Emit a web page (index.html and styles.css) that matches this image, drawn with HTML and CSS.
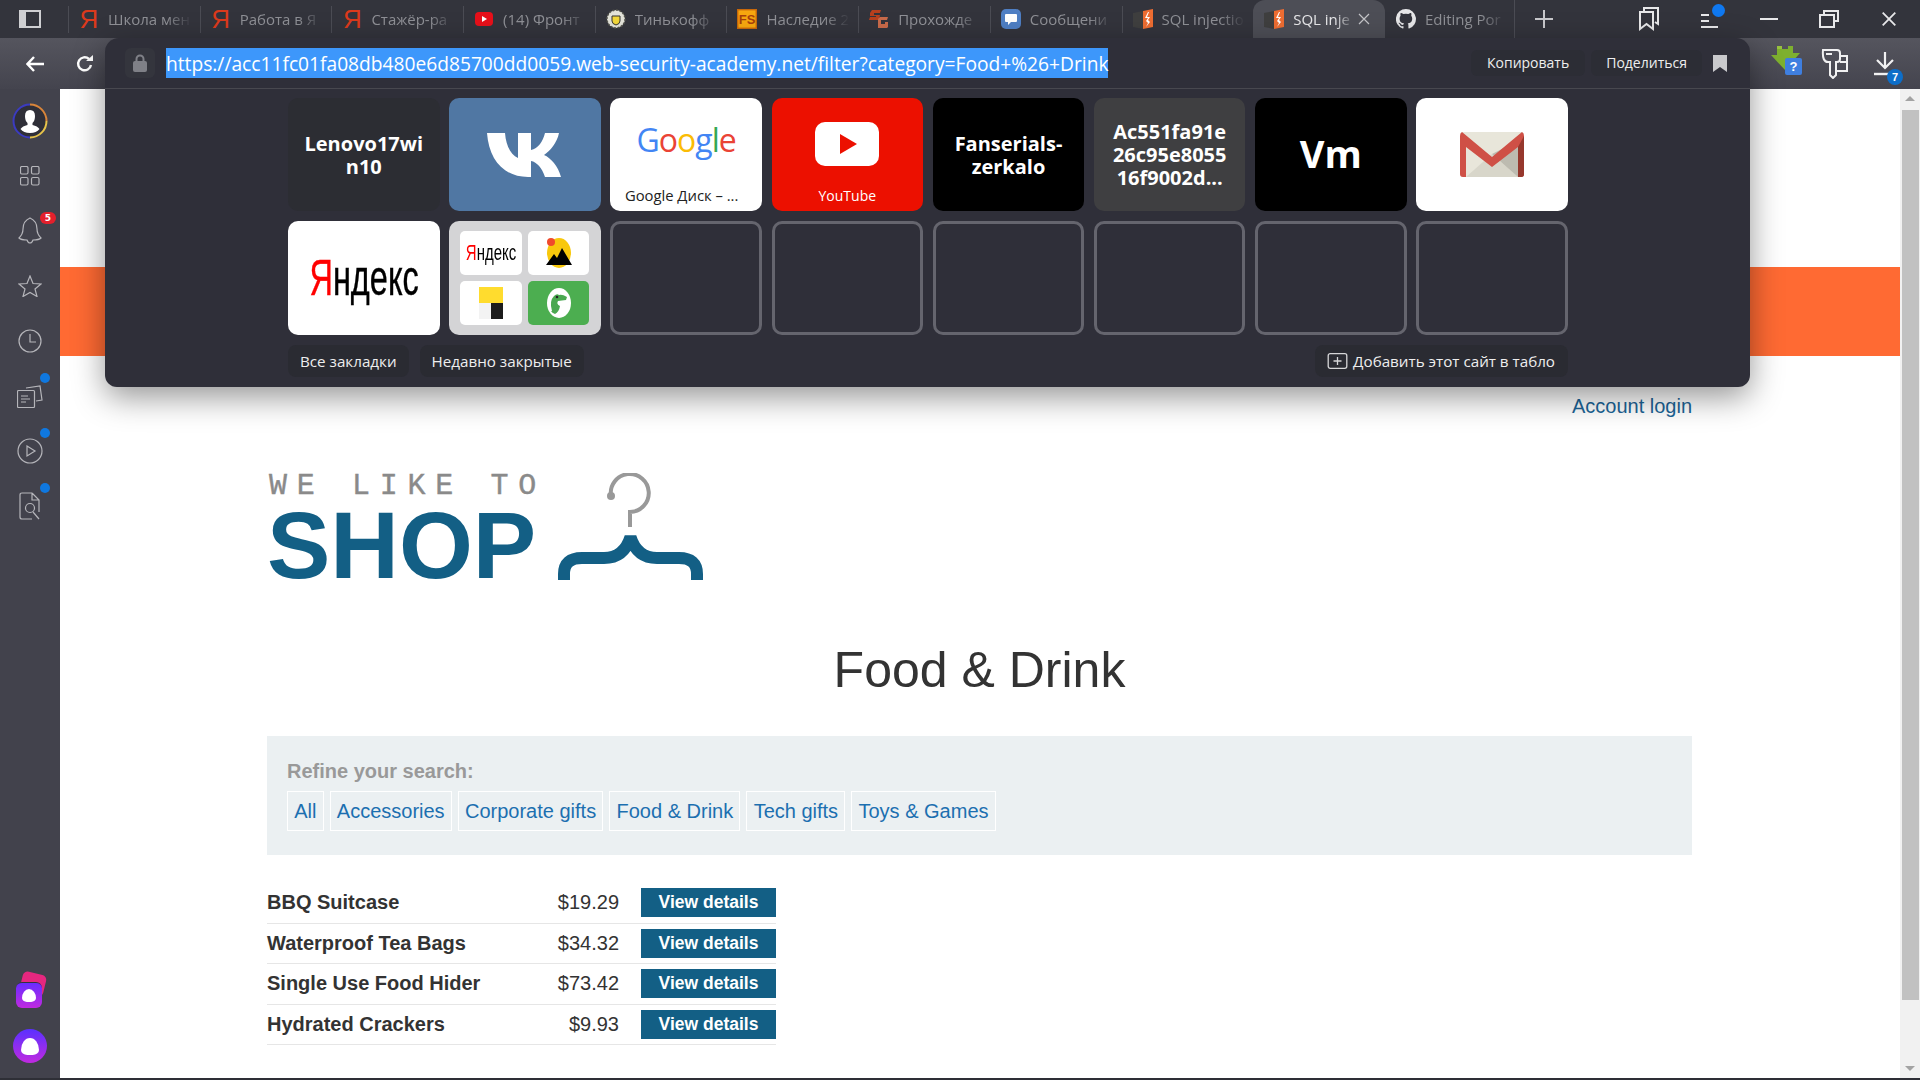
FILE: index.html
```html
<!DOCTYPE html>
<html lang="en">
<head>
    <meta charset="UTF-8">
    <title>SQL injection</title>
    <link rel="stylesheet" href="styles.css">
</head>
<body>

    <!-- Tabs row -->
    <div class="titlebar">
        <div class="sys-btn">
            <svg width="22" height="18" viewBox="0 0 22 18"><rect x="1" y="1" width="20" height="16" fill="none" stroke="#cfcfd2" stroke-width="2"/><rect x="1" y="1" width="6" height="16" fill="#cfcfd2"/></svg>
        </div>
        <div class="tabs">
            <div class="tab"><span class="ya">Я</span><span class="tab-title">Школа мен</span></div>
            <div class="tab"><span class="ya">Я</span><span class="tab-title">Работа в Я</span></div>
            <div class="tab"><span class="ya">Я</span><span class="tab-title">Стажёр-ра</span></div>
            <div class="tab">
                <svg class="tab-icon" viewBox="0 0 20 20"><rect x="1" y="3" width="18" height="14" rx="4" fill="#e8101a"/><path d="M8 7l5 3-5 3z" fill="#fff"/></svg>
                <span class="tab-title">(14) Фронт</span>
            </div>
            <div class="tab">
                <svg class="tab-icon" viewBox="0 0 20 20"><circle cx="10" cy="10" r="9" fill="#e4e4da"/><circle cx="10" cy="10" r="9" fill="none" stroke="#55554e" stroke-width="1.5" stroke-dasharray="2 1.5"/><path d="M6 7h8v5q0 3-4 4-4-1-4-4z" fill="#f4d93a" stroke="#333" stroke-width="1"/></svg>
                <span class="tab-title">Тинькофф</span>
            </div>
            <div class="tab">
                <svg class="tab-icon" viewBox="0 0 20 20"><rect width="20" height="20" fill="#f7a80f"/><rect x=".7" y=".7" width="18.600" height="18.600" fill="none" stroke="#c9680a" stroke-width="1.400"/><text x="10" y="15" class="fs-mark">FS</text></svg>
                <span class="tab-title">Наследие 2</span>
            </div>
            <div class="tab">
                <svg class="tab-icon" viewBox="0 0 20 20"><path d="M1 4l2-3h9l-1 3H5v2h6l-1 5H0l1-3h6V7H1z" fill="#b8401e"/><path d="M9 10l2-2h8l-1 3h-6v4h4v-2h3v5l-1 1H9z" fill="#c96a4a"/></svg>
                <span class="tab-title">Прохожде</span>
            </div>
            <div class="tab">
                <svg class="tab-icon" viewBox="0 0 20 20"><rect width="20" height="20" rx="5" fill="#4f7fc4"/><path d="M5 5h10q1 0 1 1v6q0 1-1 1h-5l-3 3v-3H5q-1 0-1-1V6q0-1 1-1z" fill="#fff"/></svg>
                <span class="tab-title">Сообщени</span>
            </div>
            <div class="tab">
                <svg class="tab-icon" viewBox="0 0 20 20"><use href="#academy"/></svg>
                <span class="tab-title">SQL injectio</span>
            </div>
            <div class="tab active">
                <svg class="tab-icon" viewBox="0 0 20 20"><use href="#academy"/></svg>
                <span class="tab-title short">SQL inje</span>
                <svg class="tab-close" width="12" height="12" viewBox="0 0 12 12"><path d="M1 1l10 10M11 1L1 11" stroke="#c4c4c8" stroke-width="1.200"/></svg>
            </div>
            <div class="tab">
                <svg class="tab-icon" viewBox="0 0 20 20"><path d="M10 0a10 10 0 0 0-3.200 19.500c.5.100.7-.2.7-.5v-1.800c-2.800.6-3.400-1.300-3.400-1.300-.4-1.200-1.100-1.500-1.100-1.500-.9-.6.100-.6.100-.6 1 .1 1.500 1 1.500 1 .9 1.500 2.300 1.100 2.900.8.100-.6.300-1.100.6-1.300-2.200-.3-4.500-1.100-4.500-4.900 0-1.100.4-2 1-2.700-.1-.3-.4-1.300.1-2.600 0 0 .8-.3 2.700 1a9.400 9.400 0 0 1 5 0c1.900-1.300 2.700-1 2.700-1 .5 1.300.2 2.300.1 2.600.6.700 1 1.600 1 2.700 0 3.800-2.300 4.700-4.500 4.900.4.300.7.900.7 1.900V19c0 .3.200.6.700.5A10 10 0 0 0 10 0z" fill="#e6e6e8"/></svg>
                <span class="tab-title">Editing Por</span>
            </div>
        </div>
        <div class="new-tab">
            <svg width="20" height="20" viewBox="0 0 20 20"><path d="M10 1v18M1 10h18" stroke="#c8c8cc" stroke-width="2"/></svg>
        </div>
        <div class="win-controls">
            <div class="win-btn">
                <svg width="22" height="24" viewBox="0 0 22 24"><path d="M6 4V1h14v16l-3-2" fill="none" stroke="#e8e8ea" stroke-width="2"/><path d="M2 5h13v17l-6.500-5L2 22z" fill="none" stroke="#e8e8ea" stroke-width="2"/></svg>
            </div>
            <div class="win-btn">
                <span class="list-icon"><i></i><i></i><i></i><b class="blue-dot"></b></span>
            </div>
            <div class="win-btn"><svg width="18" height="2" viewBox="0 0 18 2"><rect width="18" height="2" fill="#e8e8ea"/></svg></div>
            <div class="win-btn">
                <svg width="20" height="18" viewBox="0 0 20 18"><path d="M5 4V1h14v10h-4" fill="none" stroke="#e8e8ea" stroke-width="2"/><rect x="1" y="5" width="14" height="12" fill="none" stroke="#e8e8ea" stroke-width="2"/></svg>
            </div>
            <div class="win-btn"><svg width="14" height="14" viewBox="0 0 14 14"><path d="M.7.700l12.600 12.600M13.300.700L.7 13.300" stroke="#e8e8ea" stroke-width="1.800"/></svg></div>
        </div>
    </div>

    <!-- Toolbar under the tabs -->
    <div class="toolbar">
        <div class="nav-btns">
            <svg width="18" height="16" viewBox="0 0 18 16"><path d="M8 1L1.500 8 8 15M2 8h16" fill="none" stroke="#fff" stroke-width="2.400"/></svg>
            <svg width="18" height="18" viewBox="0 0 18 18"><path d="M15 10a6.500 6.500 0 1 1-2-6" fill="none" stroke="#fff" stroke-width="2.400"/><path d="M10 6h7V0z" fill="#fff"/></svg>
        </div>
        <div class="tool-icons">
            <span class="tool-icon">
                <svg width="34" height="36" viewBox="0 0 34 36"><path d="M7 0h5v3h6V0h5v7h7L15 24 1 9h6z" fill="#7eb02f"/><path d="M7 0h5v3H7z" fill="#98c23f"/><rect x="15" y="12" width="17" height="17" rx="2" fill="#3f7fe0"/><text x="23.500" y="25" class="help-mark">?</text></svg>
            </span>
            <span class="tool-icon">
                <svg width="28" height="30" viewBox="0 0 28 30"><path d="M2 1h14q3 0 3 3v6q0 3-3 3h-1v13l-3 3-3-3V13H7q-6 0-5-12z" fill="none" stroke="#f1f1f2" stroke-width="2"/><path d="M5 5h6" stroke="#f1f1f2" stroke-width="2"/><path d="M19 7h7v15H15" fill="none" stroke="#f1f1f2" stroke-width="2"/><path d="M19 13h7" stroke="#f1f1f2" stroke-width="2"/></svg>
            </span>
            <span class="tool-icon dl">
                <svg width="22" height="24" viewBox="0 0 22 24"><path d="M11 0v15M3 8l8 8 8-8" fill="none" stroke="#f1f1f2" stroke-width="2.200"/><path d="M0 22h22" stroke="#f1f1f2" stroke-width="2.400"/></svg>
                <span class="count">7</span>
            </span>
        </div>
    </div>

    <div class="main">
        <!-- Left side panel -->
        <aside class="sidebar">
            <div class="side-item">
                <svg width="36" height="36" viewBox="0 0 36 36"><circle cx="18" cy="18" r="16.500" fill="#2f2f38"/><path d="M18 1.500a16.500 16.500 0 0 1 16.500 16.500" fill="none" stroke="#d9853a" stroke-width="2"/><path d="M34.500 18A16.500 16.500 0 0 1 18 34.500" fill="none" stroke="#e6c34a" stroke-width="2"/><path d="M18 34.500A16.500 16.500 0 0 1 18 1.500" fill="none" stroke="#3b3bc0" stroke-width="2"/><path d="M18 7q5 0 5 6 0 5-2.500 7v2q5 1 7 4-3 4-9.500 4t-9.500-4q2-3 7-4v-2Q13 18 13 13q0-6 5-6z" fill="#fff"/></svg>
            </div>
            <div class="side-item">
                <svg class="side-icon" width="20" height="20" viewBox="0 0 20 20"><rect x=".5" y=".5" width="7.500" height="7.500" rx="1.500"/><rect x="11.500" y=".5" width="7.500" height="7.500" rx="1.500"/><rect x=".5" y="11.500" width="7.500" height="7.500" rx="1.500"/><rect x="11.500" y="11.500" width="7.500" height="7.500" rx="1.500"/></svg>
            </div>
            <div class="side-item">
                <svg class="side-icon" width="24" height="28" viewBox="0 0 24 28"><path d="M12 1q7 3 7 11 0 5 4 9-2 2-8 2-1 3-3 3t-3-3q-6 0-8-2 4-4 4-9 0-8 7-11z"/></svg>
                <span class="red-badge">5</span>
            </div>
            <div class="side-item">
                <svg class="side-icon" width="24" height="22" viewBox="0 0 24 22"><path d="M12 1l3 7.500 8 .5-6 5 2 7.500-7-4-7 4 2-7.500-6-5 8-.5z"/></svg>
            </div>
            <div class="side-item">
                <svg class="side-icon" width="24" height="24" viewBox="0 0 24 24"><circle cx="12" cy="12" r="11"/><path d="M12 5v8h6"/></svg>
            </div>
            <div class="side-item">
                <svg class="side-icon" width="26" height="24" viewBox="0 0 26 24"><path d="M9 4l14-2 2 14-6 1"/><rect x=".5" y="6.500" width="17" height="17" rx="1"/><path d="M4 12h7M4 15h9M4 18h5"/></svg>
                <span class="blue-badge"></span>
            </div>
            <div class="side-item">
                <svg class="side-icon" width="26" height="26" viewBox="0 0 26 26"><circle cx="13" cy="13" r="12"/><path d="M10 8l8 5-8 5z"/></svg>
                <span class="blue-badge"></span>
            </div>
            <div class="side-item">
                <svg class="side-icon" width="22" height="28" viewBox="0 0 22 28"><path d="M13 1H3Q1 1 1 3v22q0 2 2 2h10M13 1l7 7v12M13 1v7h7"/><circle cx="11" cy="16" r="4.500"/><path d="M14 20l6 7"/></svg>
                <span class="blue-badge"></span>
            </div>
            <div class="side-bottom">
                <div class="alice-stack"><span class="alice-back"></span><span class="alice-square"><i class="alice-mark"></i></span></div>
                <div class="alice-round"><i class="alice-mark"></i></div>
            </div>
        </aside>

        <!-- The shop page -->
        <div class="page">
            <div class="page-scroll">
                <div class="academy-bar"></div>
                <div class="container">
                    <div class="account"><a href="#">Account login</a></div>
                    <div class="logo">
                        <div class="logo-text">
                            <div class="logo-top">WE LIKE TO</div>
                            <div class="logo-shop">SHOP</div>
                        </div>
                        <svg class="hanger" width="146" height="108" viewBox="0 0 146 108">
                            <circle cx="53" cy="23" r="4" fill="#999"/>
                            <path d="M53 23A19 19 0 1 1 72 39V54" fill="none" stroke="#999" stroke-width="4"/>
                            <path d="M6 107V101Q6 85 24 85H46Q66 85 72.500 64Q79 85 99 85H121Q139 85 139 101V107" fill="none" stroke="#135f85" stroke-width="12" stroke-linejoin="bevel"/>
                        </svg>
                    </div>
                    <h1>Food &amp; Drink</h1>
                    <section class="filters">
                        <div class="filters-label">Refine your search:</div>
                        <div class="filters-links">
                            <a href="#">All</a>
                            <a href="#">Accessories</a>
                            <a href="#">Corporate gifts</a>
                            <a href="#">Food &amp; Drink</a>
                            <a href="#">Tech gifts</a>
                            <a href="#">Toys &amp; Games</a>
                        </div>
                    </section>
                    <div class="products">
                        <div class="product"><span class="product-name">BBQ Suitcase</span><span class="product-price">$19.29</span><a class="btn" href="#">View details</a></div>
                        <div class="product"><span class="product-name">Waterproof Tea Bags</span><span class="product-price">$34.32</span><a class="btn" href="#">View details</a></div>
                        <div class="product"><span class="product-name">Single Use Food Hider</span><span class="product-price">$73.42</span><a class="btn" href="#">View details</a></div>
                        <div class="product"><span class="product-name">Hydrated Crackers</span><span class="product-price">$9.93</span><a class="btn" href="#">View details</a></div>
                    </div>
                </div>
            </div>
            <div class="scrollbar">
                <span class="arrow-up"></span>
                <span class="thumb"></span>
                <span class="arrow-down"></span>
            </div>
        </div>
    </div>
    <div class="bottom-line"></div>

    <!-- Address bar dropdown with the tablo -->
    <div class="tablo">
        <div class="address">
            <span class="lock">
                <svg width="14" height="18" viewBox="0 0 14 18"><path d="M3.500 8V5a3.500 3.500 0 0 1 7 0v3" fill="none" stroke="#7f8087" stroke-width="2"/><rect y="7" width="14" height="11" rx="2" fill="#7f8087"/></svg>
            </span>
            <span class="url">https://acc11fc01fa08db480e6d85700dd0059.web-security-academy.net/filter?category=Food+%26+Drink</span>
            <span class="addr-btn">Копировать</span>
            <span class="addr-btn">Поделиться</span>
            <svg class="addr-mark" width="14" height="17" viewBox="0 0 14 17"><path d="M0 0h14v17l-7-5-7 5z" fill="#c9c9cc"/></svg>
        </div>

        <div class="tiles">
            <div class="tile tile-dark name">Lenovo17wi<br>n10</div>
            <div class="tile tile-vk">
                <svg width="76" height="46" viewBox="0 0 76 46"><path d="M0 1h18c1 13 6 22 13 25V1h13v17c7-1 12-9 14-17h14c-2 10-9 18-15 22 7 3 14 11 17 22H58c-3-9-8-15-14-16v16h-3C17 45 2 28 0 1z" fill="#fff"/></svg>
            </div>
            <div class="tile tile-white with-caption">
                <div class="google"><span class="g-b">G</span><span class="g-r">o</span><span class="g-y">o</span><span class="g-b">g</span><span class="g-g">l</span><span class="g-r">e</span></div>
                <div class="caption">Google Диск – ...</div>
            </div>
            <div class="tile tile-red with-caption">
                <svg class="yt" width="64" height="44" viewBox="0 0 64 44"><rect width="64" height="44" rx="10" fill="#fff"/><path d="M25 12l17 10-17 10z" fill="#ec1000"/></svg>
                <div class="caption">YouTube</div>
            </div>
            <div class="tile tile-black name">Fanserials-<br>zerkalo</div>
            <div class="tile tile-gray name">Ac551fa91e<br>26c95e8055<br>16f9002d...</div>
            <div class="tile tile-black name big">Vm</div>
            <div class="tile tile-white">
                <svg width="64" height="46" viewBox="0 0 64 46"><rect width="64" height="45" rx="3" fill="#e8e6da"/><path d="M6 45L32 22l26 23z" fill="#d8d6ca"/><path d="M64 6v36q0 3-3 3h-3L32 22z" fill="#bdbbb0"/><path d="M2 0l30 25L62 0q2 1 2 4v38q0 3-3 3h-3V15L32 35 6 15v30H3q-3 0-3-3V4q0-3 2-4z" fill="#cf5046"/><path d="M58 15v30h3q3 0 3-3V4z" fill="#96382d"/></svg>
            </div>

            <div class="tile tile-white"><div class="yandex big-ya"><span>Я</span>ндекс</div></div>
            <div class="tile tile-folder">
                <div class="mini"><div class="yandex small-ya"><span>Я</span>ндекс</div></div>
                <div class="mini">
                    <svg width="26" height="32" viewBox="0 0 26 32"><ellipse cx="13" cy="16" rx="12" ry="15" fill="#f8c80c"/><circle cx="5" cy="5" r="4" fill="#f04a2c"/><path d="M0 28l8-11 3 4 5-10 10 17z" fill="#000"/></svg>
                </div>
                <div class="mini">
                    <svg width="24" height="32" viewBox="0 0 24 32"><rect width="24" height="16" fill="#ffdc2e"/><rect y="16" width="12" height="16" fill="#f3f3f3"/><rect x="12" y="16" width="12" height="16" fill="#1c1c1c"/></svg>
                </div>
                <div class="mini mini-green">
                    <svg width="26" height="32" viewBox="0 0 26 32"><ellipse cx="13" cy="16" rx="12" ry="15" fill="#fff"/><path d="M6 24Q3 14 8 9q3-3 5-1 3-1 8 2l-1 3-8 1q-2 3 2 5-1 6-5 8-3-1-4-3z" fill="#4aa850"/><circle cx="11" cy="10" r="1.300" fill="#222"/></svg>
                </div>
            </div>
            <div class="tile tile-empty"></div>
            <div class="tile tile-empty"></div>
            <div class="tile tile-empty"></div>
            <div class="tile tile-empty"></div>
            <div class="tile tile-empty"></div>
            <div class="tile tile-empty"></div>
        </div>

        <div class="tablo-actions">
            <span class="tablo-btn">Все закладки</span>
            <span class="tablo-btn">Недавно закрытые</span>
            <span class="tablo-btn add-btn">
                <svg width="21" height="16" viewBox="0 0 20 16"><rect x=".7" y=".7" width="18.600" height="14.600" rx="2" fill="none" stroke="#d6d6d8" stroke-width="1.300"/><path d="M10 4v8M6 8h8" stroke="#d6d6d8" stroke-width="1.300"/></svg>
                Добавить этот сайт в табло
            </span>
        </div>
    </div>

    <!-- Shared favicon of the two academy tabs -->
    <svg class="defs" width="0" height="0">
        <symbol id="academy" viewBox="0 0 20 20">
            <path d="M0 4l10-2v18L0 18z" fill="#3f3f3f"/>
            <path d="M10 2l10-2v18l-10 2z" fill="#ee6d32"/>
            <path d="M15 3l-3 6h3l-2 3 2 2-2 4 4-5-2-2 2-3h-3l2-5z" fill="#fff"/>
        </symbol>
    </svg>
</body>
</html>
```

FILE: styles.css
```css
* {
    margin: 0;
    padding: 0;
    box-sizing: border-box;
}

html, body {
    width: 1920px;
    height: 1080px;
    overflow: hidden;
}

body {
    position: relative;
    display: flex;
    flex-direction: column;
    font-family: "Liberation Sans", Arial, sans-serif;
    background-color: #fff;
    color: #333;
}

a {
    text-decoration: none;
}

/* Tabs row */
.titlebar {
    display: flex;
    align-items: center;
    height: 38px;
    background-color: #33343c;
    font-family: "Open Sans", "Noto Sans", sans-serif;
}

.sys-btn {
    display: flex;
    justify-content: center;
    width: 60px;
    margin-right: 8px;
}

.tabs {
    display: flex;
    align-items: stretch;
    height: 38px;
}

.tab {
    display: flex;
    align-items: center;
    gap: 9px;
    width: 131.700px;
    padding-left: 11px;
    position: relative;
    font-size: 15px;
    color: #8f9096;
}

.tab::before {
    content: "";
    position: absolute;
    left: 0;
    top: 6px;
    bottom: 5px;
    width: 1px;
    background-color: #4b4c54;
}

.tab.active {
    background-color: #4d4e56;
    border-radius: 12px 12px 0 0;
    color: #e8e8ea;
}

.tab.active::before, .tab.active + .tab::before {
    display: none;
}

.tab:last-child {
    width: 130px;
    border-right: 1px solid #4b4c54;
    background-clip: padding-box;
}

.tab-icon {
    flex: none;
    width: 20px;
    height: 20px;
}

.ya {
    flex: none;
    width: 20px;
    text-align: center;
    font-family: "Liberation Sans", sans-serif;
    font-size: 26px;
    line-height: 26px;
    color: #dc3a1c;
}

.fs-mark {
    font-family: "Liberation Sans", sans-serif;
    font-size: 13px;
    font-weight: bold;
    text-anchor: middle;
    fill: #a8400c;
}

.tab-title {
    flex: 1;
    min-width: 0;
    overflow: hidden;
    white-space: nowrap;
    margin-right: 8px;
    -webkit-mask-image: linear-gradient(to right, #000 70%, transparent 100%);
    mask-image: linear-gradient(to right, #000 70%, transparent 100%);
}

.tab-title.short {
    flex: none;
    width: 61px;
    margin-right: -5px;
}

.tab-close {
    flex: none;
    margin: 0 16px 0 0;
}

.new-tab {
    display: flex;
    justify-content: center;
    width: 58px;
}

.win-controls {
    display: flex;
    margin-left: auto;
    margin-right: 1px;
}

.win-btn {
    display: flex;
    justify-content: center;
    align-items: center;
    width: 60px;
    height: 38px;
}

.list-icon {
    display: flex;
    flex-direction: column;
    gap: 4px;
    position: relative;
    width: 17px;
    padding-top: 3px;
}

.list-icon i {
    display: block;
    height: 2px;
    width: 8px;
    background-color: #e8e8ea;
}

.list-icon i:last-of-type {
    width: 17px;
}

.blue-dot {
    position: absolute;
    right: -7px;
    top: -7px;
    width: 13px;
    height: 13px;
    border-radius: 50%;
    background-color: #0f78f0;
}

/* Toolbar */
.toolbar {
    display: flex;
    justify-content: space-between;
    align-items: center;
    height: 51px;
    background: linear-gradient(#55555e, #44444e);
}

.nav-btns {
    display: flex;
    align-items: center;
    gap: 32px;
    padding-left: 26px;
}

.tool-icons {
    display: flex;
    align-items: center;
    gap: 17px;
    padding-right: 24px;
}

.tool-icon {
    position: relative;
    display: flex;
}

.tool-icon.dl {
    margin-left: 8px;
}

.help-mark {
    font-family: "Liberation Sans", sans-serif;
    font-size: 13px;
    font-weight: bold;
    text-anchor: middle;
    fill: #fff;
}

.count {
    position: absolute;
    left: 13px;
    top: 17px;
    width: 16px;
    height: 16px;
    border-radius: 50%;
    background-color: #0d6ec9;
    color: #fff;
    font-size: 11px;
    line-height: 16px;
    text-align: center;
    font-weight: bold;
}

/* Main area */
.main {
    flex: 1;
    display: flex;
    min-height: 0;
}

.bottom-line {
    height: 2px;
    background-color: #2e2f36;
}

.sidebar {
    display: flex;
    flex-direction: column;
    flex: none;
    width: 60px;
    padding-top: 4px;
    background-color: #42424c;
}

.side-item {
    position: relative;
    display: flex;
    justify-content: center;
    align-items: center;
    height: 55px;
}

.side-icon {
    fill: none;
    stroke: #b5b5ba;
    stroke-width: 1.200;
}

.red-badge {
    position: absolute;
    left: 40px;
    top: 9px;
    width: 16px;
    height: 12px;
    border-radius: 6px;
    background-color: #e3202c;
    color: #fff;
    font-family: "DejaVu Sans", sans-serif;
    font-size: 9px;
    font-weight: bold;
    line-height: 12px;
    text-align: center;
}

.blue-badge {
    position: absolute;
    left: 40px;
    top: 5px;
    width: 10px;
    height: 10px;
    border-radius: 50%;
    background-color: #0f78e0;
}

.side-bottom {
    display: flex;
    flex-direction: column;
    align-items: center;
    gap: 20px;
    margin-top: auto;
    padding-bottom: 15px;
}

.alice-stack {
    position: relative;
    width: 34px;
    height: 36px;
}

.alice-back {
    position: absolute;
    left: 8px;
    top: 0;
    width: 24px;
    height: 22px;
    border-radius: 5px;
    background-color: #e5277f;
    transform: rotate(14deg);
}

.alice-square {
    position: absolute;
    left: 3px;
    top: 9px;
    display: flex;
    justify-content: center;
    align-items: center;
    width: 26px;
    height: 26px;
    border-radius: 6px;
    background: linear-gradient(#6a2cff, #c02ae0);
    border-top: 1px solid #33333c;
}

.alice-round {
    display: flex;
    justify-content: center;
    align-items: center;
    width: 34px;
    height: 34px;
    border-radius: 50%;
    background: linear-gradient(#5a30ff, #c02ae0);
}

.alice-mark {
    display: block;
    width: 18px;
    height: 17px;
    background-color: #fff;
    border-radius: 50% 50% 35% 35% / 70% 70% 30% 30%;
}

.alice-square .alice-mark {
    width: 14px;
    height: 13px;
}

/* Shop page */
.page {
    flex: 1;
    display: flex;
    min-width: 0;
}

.page-scroll {
    flex: 1;
    min-width: 0;
}

.academy-bar {
    height: 89px;
    margin-top: 178px;
    background-color: #ff6a33;
}

.container {
    width: 1425px;
    margin-left: 207px;
}

.account {
    padding-top: 38px;
    text-align: right;
    font-size: 20px;
    line-height: 24px;
}

.account a {
    color: #1c6496;
}

.logo {
    display: flex;
    align-items: flex-end;
    gap: 12px;
    height: 112px;
    margin-top: 50px;
}

.logo-text {
    margin-bottom: -8px;
}

.logo-top {
    padding-left: 2px;
    font-family: "Liberation Mono", monospace;
    font-size: 30px;
    line-height: 24px;
    letter-spacing: 9.700px;
    color: #8a8a8a;
    white-space: nowrap;
    -webkit-text-stroke: 0.4px #8a8a8a;
}

.logo-shop {
    margin-top: 4px;
    font-size: 95px;
    line-height: 86px;
    font-weight: bold;
    color: #135f85;
}

.hanger {
    flex: none;
    margin-bottom: -1px;
}

h1 {
    margin-top: 60px;
    font-size: 50px;
    line-height: 60px;
    font-weight: normal;
    text-align: center;
    color: #333;
}

.filters {
    height: 119px;
    margin-top: 36px;
    padding: 21px 20px 0;
    background-color: #ebf0f2;
}

.filters-label {
    font-size: 20px;
    line-height: 28px;
    font-weight: bold;
    color: #999;
}

.filters-links {
    display: flex;
    gap: 6px;
    margin-top: 6px;
}

.filters-links a {
    height: 40px;
    padding: 0 6.200px;
    border: 1px solid #fff;
    font-size: 20px;
    line-height: 38px;
    color: #1c6fb0;
}

.products {
    width: 509px;
    margin-top: 28px;
}

.product {
    display: flex;
    align-items: center;
    height: 40.500px;
    border-bottom: 1px solid #e6e6e6;
    font-size: 20px;
}

.product-name {
    flex: 1;
    font-weight: bold;
    color: #333;
}

.product-price {
    width: 70px;
    text-align: right;
    color: #333;
}

.btn {
    width: 135px;
    height: 29px;
    margin-left: 22px;
    background-color: #135f85;
    color: #fff;
    font-size: 17.500px;
    font-weight: bold;
    line-height: 28px;
    text-align: center;
}

.scrollbar {
    position: relative;
    flex: none;
    display: flex;
    flex-direction: column;
    align-items: center;
    width: 20px;
    background-color: #f1f1f1;
}

.arrow-up, .arrow-down {
    flex: none;
    width: 0;
    height: 0;
    border-left: 5px solid transparent;
    border-right: 5px solid transparent;
}

.arrow-up {
    margin-top: 7px;
    border-bottom: 5px solid #a3a3a3;
}

.arrow-down {
    margin: auto 0 7px;
    border-top: 5px solid #a3a3a3;
}

.thumb {
    width: 17px;
    height: 890px;
    margin-top: 9px;
    background-color: #c1c1c1;
}

/* Tablo overlay */
.tablo {
    position: absolute;
    left: 105px;
    top: 38px;
    width: 1645px;
    height: 349px;
    border-radius: 14px 14px 12px 12px;
    background-color: #2f2f39;
    box-shadow: 0 10px 32px rgba(0, 0, 0, 0.42);
    font-family: "Open Sans", "Noto Sans", sans-serif;
    color: #fff;
}

.address {
    display: flex;
    align-items: center;
    height: 51px;
    padding: 0 0 0 20px;
    border-bottom: 1px solid #48484f;
}

.lock {
    display: flex;
    justify-content: center;
    align-items: center;
    flex: none;
    width: 30px;
    height: 30px;
    margin-right: 11px;
    border-radius: 6px;
    background-color: #34353d;
}

.url {
    flex: none;
    width: 942px;
    height: 30px;
    background-color: #3d97fb;
    font-size: 19.200px;
    line-height: 31px;
    white-space: nowrap;
}

.addr-btn {
    flex: none;
    height: 26px;
    padding: 0 16px;
    border-radius: 6px;
    background-color: #2c2d35;
    font-size: 14px;
    line-height: 25px;
    color: #eee;
}

.addr-btn:nth-of-type(3) {
    margin-left: 363px;
}

.addr-btn:nth-of-type(4) {
    margin-left: 6px;
    padding: 0 15px;
}

.addr-mark {
    flex: none;
    margin-left: 11px;
}

.tiles {
    display: grid;
    grid-template-columns: repeat(8, 151.500px);
    grid-template-rows: 113px 114px;
    column-gap: 9.700px;
    row-gap: 10px;
    margin: 9px 0 0 183px;
}

.tile {
    display: flex;
    justify-content: center;
    align-items: center;
    border-radius: 10px;
}

.name {
    text-align: center;
    font-size: 20px;
    line-height: 23px;
    font-weight: 700;
}

.name.big {
    padding-bottom: 2px;
    font-size: 38px;
}

.tile-dark {
    background-color: #2c2d33;
}

.tile-vk {
    background-color: #5077a3;
}

.tile-white {
    background-color: #fff;
}

.tile-red {
    background-color: #ec1000;
}

.tile-black {
    background-color: #000;
}

.tile-gray {
    background-color: #3f3f41;
}

.tile-empty {
    border: 3px solid #65656e;
}

.with-caption {
    flex-direction: column;
    justify-content: flex-start;
}

.google {
    margin-top: 20px;
    font-family: "Open Sans", sans-serif;
    font-size: 32px;
    line-height: 44px;
    letter-spacing: -1px;
}

.g-b { color: #4285f4; }
.g-r { color: #ea4335; }
.g-y { color: #fbbc05; }
.g-g { color: #34a853; }

.yt {
    margin-top: 24px;
}

.caption {
    margin-top: auto;
    padding-bottom: 5px;
    font-size: 14px;
    line-height: 20px;
}

.tile-white .caption {
    margin-right: 9px;
    padding-bottom: 6px;
    font-size: 14.800px;
    color: #222;
}

.tile-folder {
    display: grid;
    grid-template-columns: 62px 61px;
    grid-template-rows: 44px 44px;
    gap: 6px;
    justify-content: center;
    align-content: center;
    align-items: stretch;
    background-color: #d4d4d6;
}

.mini {
    display: flex;
    justify-content: center;
    align-items: center;
    overflow: hidden;
    border-radius: 5px;
    background-color: #fff;
}

.mini-green {
    background-color: #4cae50;
}

.yandex {
    font-family: "Liberation Sans", sans-serif;
    color: #000;
    white-space: nowrap;
}

.yandex span {
    color: #f00;
}

.big-ya {
    font-size: 50px;
    -webkit-text-stroke: 0.4px currentColor;
    transform: scaleX(.65);
}

.small-ya {
    font-size: 22px;
    transform: scaleX(.68);
}

.tablo-actions {
    display: flex;
    gap: 11px;
    margin: 10px 182px 0 183px;
}

.tablo-btn {
    display: flex;
    align-items: center;
    gap: 5px;
    height: 32px;
    padding: 0 12px;
    border-radius: 8px;
    background-color: #2a2b32;
    font-size: 15.200px;
    color: #eee;
}

.add-btn {
    margin-left: auto;
    padding-right: 13px;
}

.defs {
    position: absolute;
}
```
